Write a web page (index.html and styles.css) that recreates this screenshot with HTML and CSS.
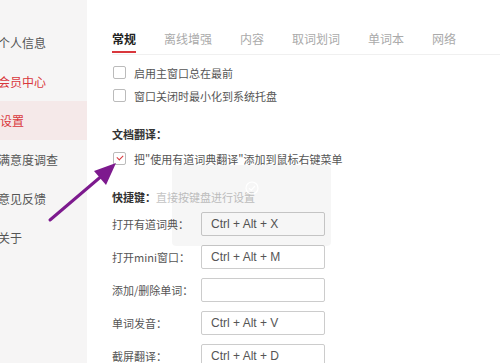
FILE: index.html
```html
<!DOCTYPE html>
<html lang="zh-CN">
<head>
    <meta charset="UTF-8">
    <title>设置</title>
    <link rel="stylesheet" href="styles.css">
</head>
<body>
    <div class="app">
        <ul class="sidebar">
            <li>个人信息</li>
            <li class="vip">会员中心</li>
            <li class="active">设置</li>
            <li>满意度调查</li>
            <li>意见反馈</li>
            <li>关于</li>
        </ul>

        <div class="main">
            <div class="tabs">
                <span class="tab current">常规</span>
                <span class="tab">离线增强</span>
                <span class="tab">内容</span>
                <span class="tab">取词划词</span>
                <span class="tab">单词本</span>
                <span class="tab">网络</span>
            </div>

            <label class="check first"><span class="box"></span>启用主窗口总在最前</label>
            <label class="check"><span class="box"></span>窗口关闭时最小化到系统托盘</label>

            <div class="heading doc">文档翻译：</div>
            <label class="check"><span class="box checked"></span>把"使用有道词典翻译"添加到鼠标右键菜单</label>

            <div class="heading keys">快捷键：<span class="hint">直接按键盘进行设置</span></div>
            <div class="keys-list">
                <div class="key-row"><span class="key-label">打开有道词典：</span><span class="key-input">Ctrl + Alt + X</span></div>
                <div class="key-row"><span class="key-label">打开mini窗口：</span><span class="key-input">Ctrl + Alt + M</span></div>
                <div class="key-row"><span class="key-label">添加/删除单词：</span><span class="key-input"></span></div>
                <div class="key-row"><span class="key-label">单词发音：</span><span class="key-input">Ctrl + Alt + V</span></div>
                <div class="key-row"><span class="key-label">截屏翻译：</span><span class="key-input">Ctrl + Alt + D</span></div>
            </div>
        </div>
    </div>

    <!-- toast that was fading out -->
    <div class="toast">
        <svg width="14" height="14" viewBox="0 0 14 14">
            <circle cx="7" cy="7" r="6" fill="none" stroke="#fff" stroke-width="1.2"/>
            <path d="M4 7.2 L6.2 9.2 L10 5" fill="none" stroke="#fff" stroke-width="1.2"/>
        </svg>
    </div>

    <!-- annotation arrow -->
    <svg class="arrow" width="80" height="70" viewBox="0 0 80 70">
        <path d="M4 64 L58 18" stroke="#7d1a8e" stroke-width="3" stroke-linecap="round"/>
        <path d="M70 7 L48 15 L60 29 Z" fill="#7d1a8e"/>
    </svg>
</body>
</html>
```

FILE: styles.css
```css
body {
    margin: 0;
    width: 500px;
    height: 363px;
    overflow: hidden;
    font-family: "Noto Sans CJK SC", "Liberation Sans", sans-serif;
    font-size: 11px;
    color: #555;
    background: #fff;
    position: relative;
}
.app {
    display: flex;
    height: 100%;
}
.sidebar {
    list-style: none;
    margin: 0;
    padding: 23px 0 0;
    width: 87px;
    flex-shrink: 0;
    background: #f6f5f5;
}
.sidebar li {
    height: 39px;
    line-height: 39px;
    font-size: 12px;
    color: #555;
    margin-left: -2px;
    padding-left: 0;
}
.sidebar li.vip {
    color: #d9373c;
}
.sidebar li.active {
    color: #d9373c;
    background: #f5e9e9;
    margin-left: 0;
    padding-left: 0;
}
.main {
    flex: 1;
    padding-left: 25px;
}
.tabs {
    display: flex;
    gap: 28px;
    height: 30px;
    margin-top: 24px;
    border-bottom: 1px solid #f0f0f0;
    font-size: 12px;
}
.tab {
    color: #aaa;
    line-height: 29px;
    height: 29px;
}
.tab.current {
    color: #222;
    font-weight: bold;
    border-bottom: 2px solid #d9373c;
    height: 27px;
}
.check {
    display: flex;
    align-items: center;
    height: 23px;
    color: #555;
}
.check.first {
    margin-top: 6px;
}
.box {
    width: 11px;
    height: 11px;
    border: 1px solid #bbb;
    border-radius: 2px;
    margin: 0 8px 0 1px;
    box-sizing: content-box;
    position: relative;
}
.box.checked::after {
    content: "";
    position: absolute;
    left: 3px;
    top: 2px;
    width: 5px;
    height: 3px;
    border-left: 1.5px solid #d9373c;
    border-bottom: 1.5px solid #d9373c;
    transform: rotate(-45deg);
}
.heading {
    height: 20px;
    line-height: 20px;
    font-weight: bold;
    color: #333;
}
.heading.doc {
    margin-top: 17px;
    margin-bottom: 3px;
}
.heading.keys {
    margin-top: 17px;
    margin-bottom: 5px;
}
.hint {
    font-weight: normal;
    color: #c4c4c4;
}
.keys-list {
    display: flex;
    flex-direction: column;
    gap: 9px;
}
.key-row {
    display: flex;
    align-items: center;
    height: 24px;
}
.key-label {
    width: 89px;
    color: #555;
}
.key-input {
    width: 113px;
    height: 22px;
    line-height: 22px;
    padding-left: 9px;
    border: 1px solid #ccc;
    border-radius: 2px;
    font-family: "Liberation Sans", Arial, sans-serif;
    font-size: 12px;
    color: #555;
}
.toast {
    position: absolute;
    left: 172px;
    top: 165px;
    width: 159px;
    height: 81px;
    background: rgba(0, 0, 0, 0.035);
    border-radius: 4px;
    display: flex;
    justify-content: center;
    padding-top: 16px;
    box-sizing: border-box;
}
.arrow {
    position: absolute;
    left: 46px;
    top: 156px;
}
```
